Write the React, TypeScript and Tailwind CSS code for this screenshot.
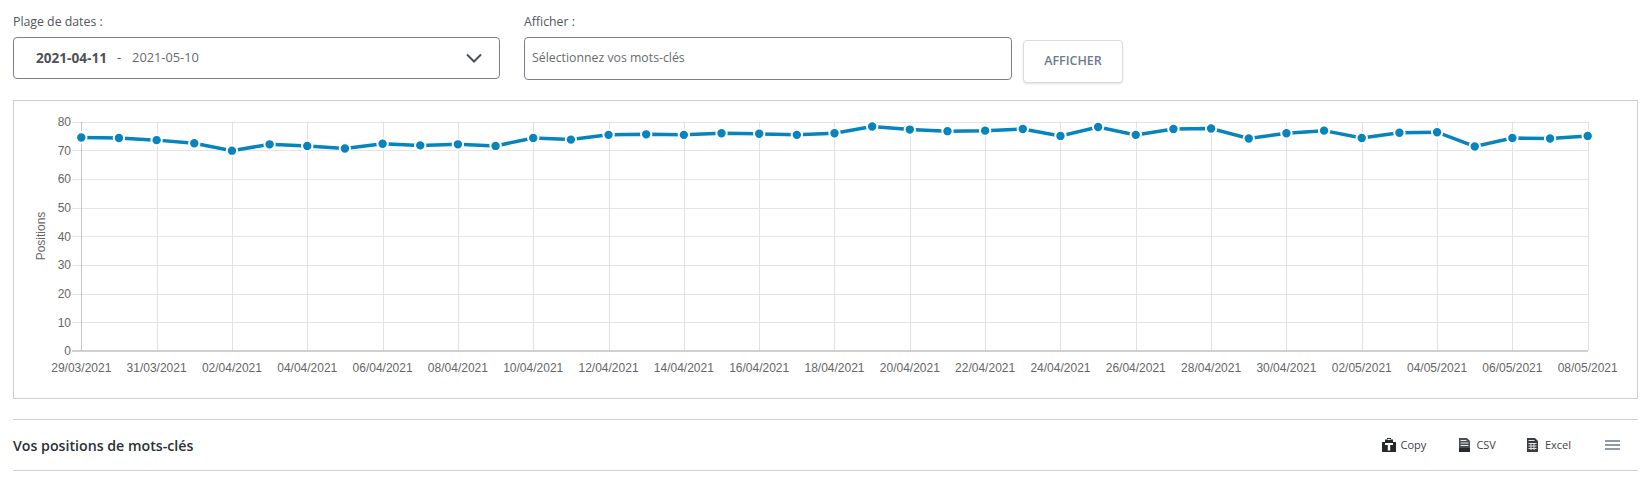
import React from "react";

const ysRaw = [130.5,131,133,136,143,137,138.5,141,136.5,138,137,138.5,131,132.5,128,127.5,128,126.5,127,128,126.5,120,123,124.5,124,122.5,129,120.5,128,122.5,122,131.5,126.5,124,131,126,125.5,139,131,131.5,129];
const ys = ysRaw.map((y) => y * 1.0536);
const X0 = 81.3;
const STEP = 37.66;
const px = (i: number) => X0 + i * STEP;
const Y80 = 121.5;
const YSTEP = 28.67;
const yLabels = [80,70,60,50,40,30,20,10,0];
const dates = ["29/03/2021","31/03/2021","02/04/2021","04/04/2021","06/04/2021","08/04/2021","10/04/2021","12/04/2021","14/04/2021","16/04/2021","18/04/2021","20/04/2021","22/04/2021","24/04/2021","26/04/2021","28/04/2021","30/04/2021","02/05/2021","04/05/2021","06/05/2021","08/05/2021"];

function Chart() {
  const offX = 14, offY = 101;
  return (
    <svg width="1624" height="297" className="block">
      <g transform={`translate(${-offX},${-offY})`} fontFamily="'Liberation Sans', Arial, sans-serif" fontSize="12" fill="#666">
        {yLabels.slice(0, 8).map((_, i) => {
          const y = Math.round(Y80 + i * YSTEP) + 0.5;
          return <line key={i} x1={72} x2={1588} y1={y} y2={y} stroke="#e5e5e5" />;
        })}
        {dates.map((_, i) => {
          const x = Math.round(px(i * 2)) + 0.5;
          return <line key={i} x1={x} x2={x} y1={121.5} y2={351} stroke={i === 0 ? "#c6c6c6" : "#e2e2e2"} />;
        })}
        <line x1={72} x2={1588} y1={351} y2={351} stroke="#a3a3a3" />
        {yLabels.map((l, i) => <text key={l} x={71} y={Y80 + i * YSTEP + 4.5} textAnchor="end">{l}</text>)}
        {dates.map((d, i) => <text key={d} x={px(i * 2)} y={372} textAnchor="middle">{d}</text>)}
        <text transform="translate(45,236) rotate(-90)" textAnchor="middle">Positions</text>
        <polyline points={ys.map((y, i) => `${px(i)},${y}`).join(" ")} fill="none" stroke="#0784bd" strokeWidth="3.5" />
        {ys.map((y, i) => <circle key={i} cx={px(i)} cy={y} r={5.2} fill="#0784bd" stroke="#fff" strokeWidth="2" />)}
      </g>
    </svg>
  );
}

function CopyIcon() {
  return (
    <svg width="14" height="14" viewBox="0 0 14 14">
      <path d="M5 0h4v1.500h2V4h2.500a.5.5 0 0 1 .5.5V13.500a.5.5 0 0 1-.5.5H.5a.5.5 0 0 1-.5-.5V4.500a.5.5 0 0 1 .5-.5H3V1.500h2z" fill="#26292c" />
      <path d="M3 5h8V7H8.200V12.500H5.800V7H3z" fill="#fff" />
      <rect x="5.500" y="1" width="3" height="1" fill="#fff" />
    </svg>
  );
}

function CsvIcon() {
  return (
    <svg width="11" height="14" viewBox="0 0 11 14">
      <path d="M0 0h8l3 3v11H0z" fill="#4a4e52" />
      <path d="M1.500 2.500h6M1.500 5h8M1.500 7.500h8" stroke="#e8e8e8" strokeWidth="1" />
      <rect x="0" y="10" width="11" height="4" fill="#26292c" />
    </svg>
  );
}

function ExcelIcon() {
  return (
    <svg width="11" height="14" viewBox="0 0 11 14">
      <path d="M0 0h8l3 3v11H0z" fill="#3a3e42" />
      <path d="M1.500 2.500h6M1.500 5.500h8M1.500 8h8M1.500 10.500h8M4 5v7M7 5v7" stroke="#e4e4e4" strokeWidth="1" />
    </svg>
  );
}

export default function App() {
  return (
    <div className="w-[1652px] h-[480px] bg-white overflow-hidden font-['Open_Sans','Noto_Sans',sans-serif] text-[#50565c]">
      <div className="w-[1625px] ml-[13px] pt-[14px]">
        <div className="flex h-[86px]">
          <div className="w-[487px]">
            <div className="text-[12.3px] leading-[16px] h-[23px]">Plage de dates :</div>
            <div className="h-[42px] flex items-center rounded border border-[#7a808a] pl-[22px] pr-[17px] text-[12.8px]">
              <span className="font-bold text-[13.6px] text-[#4e5358]">2021-04-11</span>
              <span className="ml-[10px] mr-[11px]">-</span>
              <span className="text-[#666b70]">2021-05-10</span>
              <svg className="ml-auto" width="16" height="10" viewBox="0 0 16 10" fill="none" stroke="#4b5157" strokeWidth="2"><path d="M1 1.500 8 8.500 15 1.500" /></svg>
            </div>
          </div>
          <div className="w-[488px] ml-[24px]">
            <div className="text-[12.3px] leading-[16px] h-[23px]">Afficher :</div>
            <div className="h-[43px] flex items-center rounded border border-[#7a808a] pl-[7px] text-[12.3px] text-[#666b70]">Sélectionnez vos mots-clés</div>
          </div>
          <button className="w-[100px] h-[43px] ml-[11px] mt-[26px] rounded border border-[#dcdcdc] bg-white shadow-[0_1px_2px_rgba(0,0,0,0.12)] text-[12.5px] font-semibold text-[#6d7a90]">AFFICHER</button>
        </div>
        <div className="h-[299px] w-[1625px] border border-[#cfcfd2]">
          <Chart />
        </div>
        <div className="mt-[20px] h-[52px] border-y border-[#d0d0d3] flex items-center">
          <div className="text-[14.2px] font-semibold text-[#2b3036] translate-y-[0.5px]">Vos positions de mots-clés</div>
          <div className="ml-auto flex items-center text-[11px] text-[#3c4248]">
            <span className="flex items-center gap-[5px]"><CopyIcon />Copy</span>
            <span className="flex items-center gap-[6px] ml-[33px]"><CsvIcon />CSV</span>
            <span className="flex items-center gap-[7px] ml-[31px]"><ExcelIcon />Excel</span>
            <svg className="ml-[34px] mr-[18px]" width="15" height="12" viewBox="0 0 15 12" stroke="#6d7a8c" strokeWidth="1.6"><path d="M0 2h15M0 6h15M0 10h15" /></svg>
          </div>
        </div>
      </div>
    </div>
  );
}
